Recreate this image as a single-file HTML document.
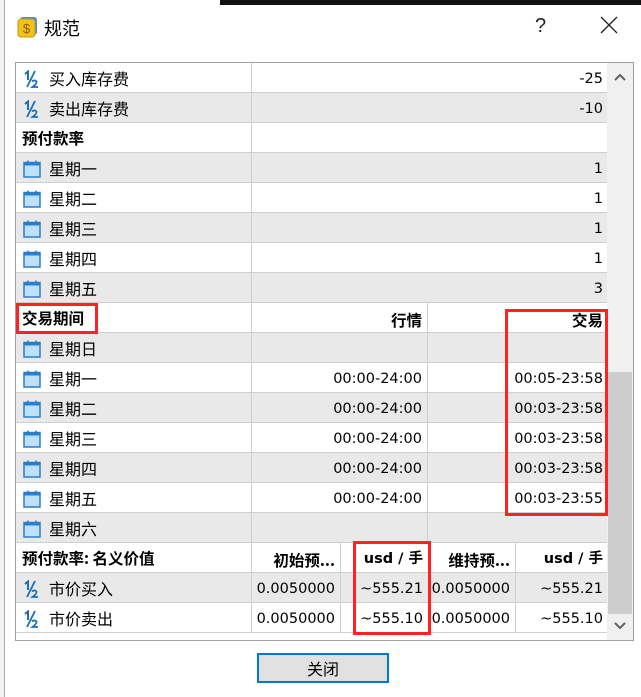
<!DOCTYPE html>
<html><head><meta charset="utf-8"><style>
*{margin:0;padding:0;box-sizing:border-box}
body{width:641px;height:697px;background:#fff;position:relative;overflow:hidden;font-family:"DejaVu Sans","Noto Sans CJK SC",sans-serif;font-size:14.5px;color:#000}
.top{position:absolute;left:0;top:0;width:641px;height:5px;background:#fff}
.topdark{position:absolute;left:220px;top:0;width:421px;height:5px;background:#111}
.left{position:absolute;left:0;top:0;width:5px;height:697px;background:#f2f2f2;border-right:1px solid #aaa}
.title{position:absolute;left:44px;top:15px;font-size:18px;font-family:"Noto Sans CJK SC",sans-serif}
.help{position:absolute;left:535px;top:15px;font-size:20px;color:#222;font-family:"Liberation Sans",sans-serif}
.close{position:absolute;left:600px;top:16px}
.box{position:absolute;left:15px;top:62px;width:619px;height:579px;border:1px solid #a0a0a0;overflow:hidden}
.row{position:absolute;left:0;width:592px;height:30px;border-bottom:1px solid #cfcfcf}
.g{background:#e9e9e9}
.c{position:absolute;top:2px;height:28px;line-height:28px;white-space:nowrap}
.r{text-align:right;padding-right:5px}
.sep{border-left:1px solid #cfcfcf;top:0;height:29px;padding-top:2px}
.b{font-weight:bold}
.ic{position:absolute;left:7px;top:7px}
.lbl{left:33px;font-size:16px;font-family:"Noto Sans CJK SC",sans-serif;top:0;line-height:30px}
.sb{position:absolute;left:591px;top:0;width:27px;height:579px;background:#f0f0f0}
.thumb{position:absolute;left:1px;top:309px;width:24px;height:242px;background:#cdcdcd}
.red{position:absolute;border:3px solid #f22;}
.btn{position:absolute;left:257px;top:653px;width:132px;height:30px;border:2px solid #0078d7;background:#e1e1e1;text-align:center;line-height:26px;font-size:16px;font-family:"Noto Sans CJK SC",sans-serif}
.h{font-size:15.5px}
</style></head><body>
<div class="top"></div><div class="topdark"></div><div class="left"></div>
<svg style="position:absolute;left:17px;top:16px" width="22" height="22"><rect x="3" y="1" width="17" height="18" rx="3" fill="#4a8fd8"/><rect x="1" y="3" width="17" height="18" rx="3" fill="#f2c21c" stroke="#c99a00"/><text x="9.5" y="17" font-size="13" text-anchor="middle" fill="#8a5a00" font-family="Liberation Sans">$</text></svg>
<div class="title">规范</div>
<div class="help">?</div>
<svg class="close" width="18" height="18"><path d="M1 1L17 17M17 1L1 17" stroke="#222" stroke-width="1.3"/></svg>
<svg width="0" height="0" style="position:absolute"><defs>
<symbol id="half" viewBox="0 0 16 18"><path d="M2 4L5 1.5V10" stroke="#1b6fb8" stroke-width="2" fill="none"/><path d="M12 1L4 17" stroke="#1b6fb8" stroke-width="1.8"/><path d="M9 11.5Q11.5 9.5 13.5 11.5Q14 13.5 9.5 17H15" stroke="#1b6fb8" stroke-width="1.8" fill="none"/></symbol>
<symbol id="cal" viewBox="0 0 18 18"><rect x="1" y="2.5" width="16" height="14.5" fill="#bfe0fb" stroke="#2a7fc8" stroke-width="1.5"/><rect x="1" y="2.5" width="16" height="3" fill="#2a7fc8"/><path d="M5 0.5V4M13 0.5V4" stroke="#2a7fc8" stroke-width="1.5"/></symbol>
</defs></svg>
<div class="box">
<div class="row" style="top:0"><svg class="ic" width="16" height="18"><use href="#half"/></svg><div class="c lbl">买入库存费</div><div class="c r sep" style="left:235px;width:357px">-25</div></div>
<div class="row g" style="top:30px"><svg class="ic" width="16" height="18"><use href="#half"/></svg><div class="c lbl">卖出库存费</div><div class="c r sep" style="left:235px;width:357px">-10</div></div>
<div class="row" style="top:60px"><div class="c b lbl h" style="left:6px">预付款率</div><div class="c sep" style="left:235px;width:357px"></div></div>
<div class="row g" style="top:90px"><svg class="ic" width="18" height="18"><use href="#cal"/></svg><div class="c lbl">星期一</div><div class="c r sep" style="left:235px;width:357px">1</div></div>
<div class="row" style="top:120px"><svg class="ic" width="18" height="18"><use href="#cal"/></svg><div class="c lbl">星期二</div><div class="c r sep" style="left:235px;width:357px">1</div></div>
<div class="row g" style="top:150px"><svg class="ic" width="18" height="18"><use href="#cal"/></svg><div class="c lbl">星期三</div><div class="c r sep" style="left:235px;width:357px">1</div></div>
<div class="row" style="top:180px"><svg class="ic" width="18" height="18"><use href="#cal"/></svg><div class="c lbl">星期四</div><div class="c r sep" style="left:235px;width:357px">1</div></div>
<div class="row g" style="top:210px"><svg class="ic" width="18" height="18"><use href="#cal"/></svg><div class="c lbl">星期五</div><div class="c r sep" style="left:235px;width:357px">3</div></div>
<div class="row" style="top:240px"><div class="c b lbl h" style="left:6px">交易期间</div><div class="c r sep b lbl h" style="left:235px;width:176px;top:0">行情</div><div class="c r sep b lbl h" style="left:411px;width:181px;top:0">交易</div></div>
<div class="row g" style="top:270px"><svg class="ic" width="18" height="18"><use href="#cal"/></svg><div class="c lbl">星期日</div><div class="c r sep" style="left:235px;width:176px"></div><div class="c r sep" style="left:411px;width:181px"></div></div>
<div class="row" style="top:300px"><svg class="ic" width="18" height="18"><use href="#cal"/></svg><div class="c lbl">星期一</div><div class="c r sep" style="left:235px;width:176px">00:00-24:00</div><div class="c r sep" style="left:411px;width:181px">00:05-23:58</div></div>
<div class="row g" style="top:330px"><svg class="ic" width="18" height="18"><use href="#cal"/></svg><div class="c lbl">星期二</div><div class="c r sep" style="left:235px;width:176px">00:00-24:00</div><div class="c r sep" style="left:411px;width:181px">00:03-23:58</div></div>
<div class="row" style="top:360px"><svg class="ic" width="18" height="18"><use href="#cal"/></svg><div class="c lbl">星期三</div><div class="c r sep" style="left:235px;width:176px">00:00-24:00</div><div class="c r sep" style="left:411px;width:181px">00:03-23:58</div></div>
<div class="row g" style="top:390px"><svg class="ic" width="18" height="18"><use href="#cal"/></svg><div class="c lbl">星期四</div><div class="c r sep" style="left:235px;width:176px">00:00-24:00</div><div class="c r sep" style="left:411px;width:181px">00:03-23:58</div></div>
<div class="row" style="top:420px"><svg class="ic" width="18" height="18"><use href="#cal"/></svg><div class="c lbl">星期五</div><div class="c r sep" style="left:235px;width:176px">00:00-24:00</div><div class="c r sep" style="left:411px;width:181px">00:03-23:55</div></div>
<div class="row g" style="top:450px"><svg class="ic" width="18" height="18"><use href="#cal"/></svg><div class="c lbl">星期六</div><div class="c r sep" style="left:235px;width:176px"></div><div class="c r sep" style="left:411px;width:181px"></div></div>
<div class="row" style="top:480px"><div class="c b lbl h" style="left:6px">预付款率: 名义价值</div><div class="c r sep b lbl h" style="left:235px;width:89px;top:0">初始预...</div><div class="c r sep b" style="left:324px;width:88px">usd / 手</div><div class="c r sep b lbl h" style="left:412px;width:87px;top:0">维持预...</div><div class="c r sep b" style="left:499px;width:93px">usd / 手</div></div>
<div class="row g" style="top:510px"><svg class="ic" width="16" height="18"><use href="#half"/></svg><div class="c lbl">市价买入</div><div class="c r sep" style="left:235px;width:89px">0.0050000</div><div class="c r sep" style="left:324px;width:88px">~555.21</div><div class="c r sep" style="left:412px;width:87px">0.0050000</div><div class="c r sep" style="left:499px;width:93px">~555.21</div></div>
<div class="row" style="top:540px"><svg class="ic" width="16" height="18"><use href="#half"/></svg><div class="c lbl">市价卖出</div><div class="c r sep" style="left:235px;width:89px">0.0050000</div><div class="c r sep" style="left:324px;width:88px">~555.10</div><div class="c r sep" style="left:412px;width:87px">0.0050000</div><div class="c r sep" style="left:499px;width:93px">~555.10</div></div>
<div class="sb"><svg style="position:absolute;left:7px;top:10px" width="12" height="8"><path d="M1 7L6 2L11 7" stroke="#606060" stroke-width="2" fill="none"/></svg><div class="thumb"></div><svg style="position:absolute;left:7px;top:559px" width="12" height="8"><path d="M1 1L6 6L11 1" stroke="#606060" stroke-width="2" fill="none"/></svg></div>
</div>
<div class="red" style="left:16px;top:303px;width:82px;height:31px"></div>
<div class="red" style="left:505px;top:309px;width:103px;height:207px"></div>
<div class="red" style="left:353px;top:541px;width:78px;height:94px"></div>
<div class="btn">关闭</div>
</body></html>
